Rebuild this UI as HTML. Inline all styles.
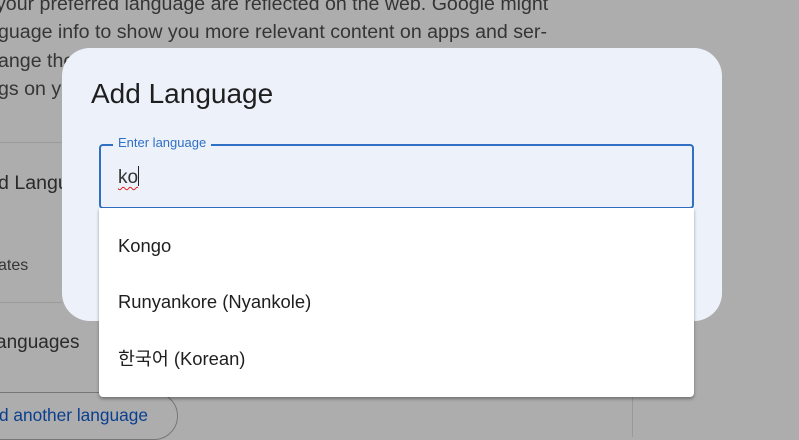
<!DOCTYPE html>
<html><head><meta charset="utf-8"><style>
body{margin:0;width:799px;height:431px;overflow:hidden;background:#adadad;font-family:"Liberation Sans","Noto Sans CJK KR",sans-serif;position:relative}
.bg{position:absolute;color:#353535;font-size:19.6px;white-space:nowrap}
.hr{position:absolute;left:0;width:62px;height:1px;background:#9a9a9a}
.dlg{position:absolute;left:62px;top:48px;width:660px;height:273px;background:#edf2fa;border-radius:28px}
.title{position:absolute;left:91px;top:78px;font-size:28px;color:#1f1f1f}
.inp{position:absolute;left:99px;top:144px;width:591px;height:61px;border:2px solid #2f6fc4;border-radius:4px}
.lbl{position:absolute;left:113px;top:135px;background:#edf2fa;padding:0 5px;color:#2f6fc4;font-size:13px}
.txt{position:absolute;left:118px;top:166px;font-size:19px;color:#333}
.dd{position:absolute;left:99px;top:208px;width:595px;height:189px;background:#fff;border-radius:0 0 4px 4px;box-shadow:0 2px 3px rgba(0,0,0,.35)}
.it{position:absolute;left:118px;font-size:18.4px;color:#1f1f1f}
</style></head><body>
<div class="bg" style="left:-4px;top:-7px">your preferred language are reflected on the web. Google might</div>
<div class="bg" style="left:-2px;top:21px">guage info to show you more relevant content on apps and ser-</div>
<div class="bg" style="left:-2px;top:50px">ange the</div>
<div class="bg" style="left:-2px;top:78px">gs on y</div>
<div class="hr" style="top:142px"></div>
<div class="bg" style="left:-2px;top:172px;color:#2a2a2a">d Langu</div>
<div class="bg" style="left:-2px;top:257px;font-size:16px">ates</div>
<div class="hr" style="top:302px"></div>
<div class="bg" style="left:-4px;top:332px;color:#2a2a2a;font-size:19px">anguages</div>
<div style="position:absolute;left:-40px;top:392px;width:216px;height:46px;border:1px solid #777;border-radius:24px"></div>
<div class="bg" style="left:-1px;top:405px;color:#0b3e8f;font-size:17.3px">d another language</div>
<div style="position:absolute;left:632px;top:397px;width:1px;height:40px;background:#999"></div>
<div class="dlg"></div>
<div class="title">Add Language</div>
<div class="inp"></div>
<div class="lbl">Enter language</div>
<div class="txt"><span style="text-decoration:underline wavy #d22;text-underline-offset:3px;text-decoration-thickness:1px">ko</span><span style="display:inline-block;width:1px;height:20px;background:#222;vertical-align:-3px"></span></div>
<div class="dd"></div>
<div class="it" style="top:235px">Kongo</div>
<div class="it" style="top:291px">Runyankore (Nyankole)</div>
<div class="it" style="top:345px">한국어 (Korean)</div>
</body></html>
